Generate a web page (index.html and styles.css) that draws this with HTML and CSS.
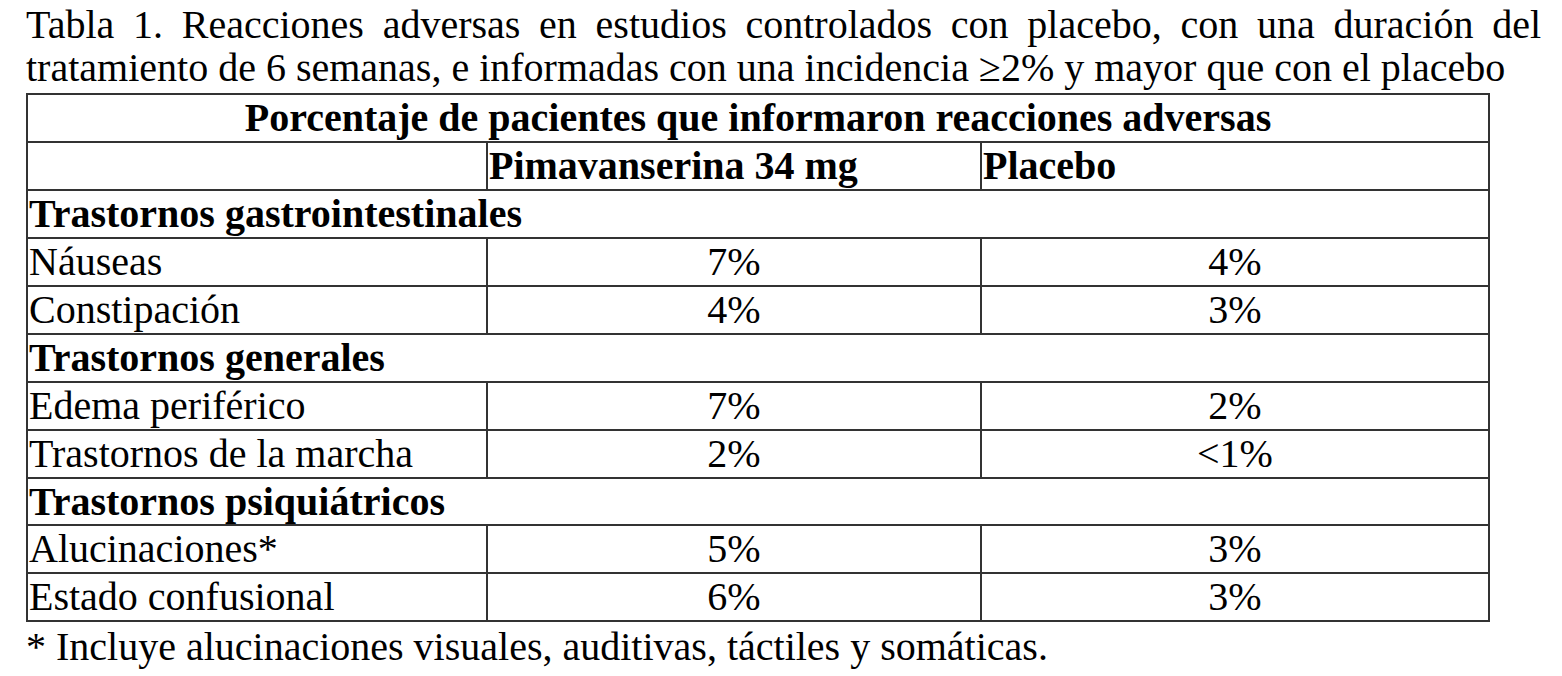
FILE: index.html
```html
<!DOCTYPE html>
<html lang="es">
<head>
<meta charset="utf-8">
<title>Tabla 1</title>
<link rel="stylesheet" href="styles.css">
</head>
<body>
<div class="page">
  <p class="caption">Tabla 1. Reacciones adversas en estudios controlados con placebo, con una duración del tratamiento de 6 semanas, e informadas con una incidencia ≥2% y mayor que con el placebo</p>
  <table class="ae-table">
    <colgroup>
      <col class="c1">
      <col class="c2">
      <col class="c3">
    </colgroup>
    <tbody>
      <tr><th colspan="3" class="title">Porcentaje de pacientes que informaron reacciones adversas</th></tr>
      <tr><td></td><th class="colhead">Pimavanserina 34 mg</th><th class="colhead">Placebo</th></tr>
      <tr><th colspan="3" class="cat">Trastornos gastrointestinales</th></tr>
      <tr><td class="lbl">Náuseas</td><td class="val">7%</td><td class="val">4%</td></tr>
      <tr><td class="lbl">Constipación</td><td class="val">4%</td><td class="val">3%</td></tr>
      <tr><th colspan="3" class="cat">Trastornos generales</th></tr>
      <tr><td class="lbl">Edema periférico</td><td class="val">7%</td><td class="val">2%</td></tr>
      <tr><td class="lbl">Trastornos de la marcha</td><td class="val">2%</td><td class="val">&lt;1%</td></tr>
      <tr><th colspan="3" class="cat">Trastornos psiquiátricos</th></tr>
      <tr><td class="lbl">Alucinaciones*</td><td class="val">5%</td><td class="val">3%</td></tr>
      <tr><td class="lbl">Estado confusional</td><td class="val">6%</td><td class="val">3%</td></tr>
    </tbody>
  </table>
  <p class="note">* Incluye alucinaciones visuales, auditivas, táctiles y somáticas.</p>
</div>
</body>
</html>
```

FILE: styles.css
```css
html, body {
  margin: 0;
  padding: 0;
  background: #ffffff;
}

body {
  font-family: "Liberation Serif", "Times New Roman", serif;
  color: #000;
}

.page {
  padding: 3px 0 0 26px;
}

.caption {
  margin: 0;
  width: 1515px;
  font-size: 40px;
  line-height: 43.4px;
  text-align: justify;
}

.ae-table {
  margin-top: 3.5px;
  border-collapse: collapse;
  table-layout: fixed;
  width: 1462px;
  font-size: 40px;
}

.c1 { width: 460px; }
.c2 { width: 494px; }
.c3 { width: 508px; }

.ae-table th,
.ae-table td {
  border: 2px solid #333;
  padding: 0 1px;
  height: 45.9px;
  line-height: 45.9px;
  vertical-align: middle;
  white-space: nowrap;
}

.ae-table th {
  font-weight: bold;
  text-align: left;
}

.ae-table th.title {
  text-align: center;
}

.ae-table .val {
  text-align: center;
}

.ae-table .lbl {
  text-align: left;
}

.note {
  margin: 3px 0 0;
  font-size: 40px;
  line-height: 43.4px;
}
```
